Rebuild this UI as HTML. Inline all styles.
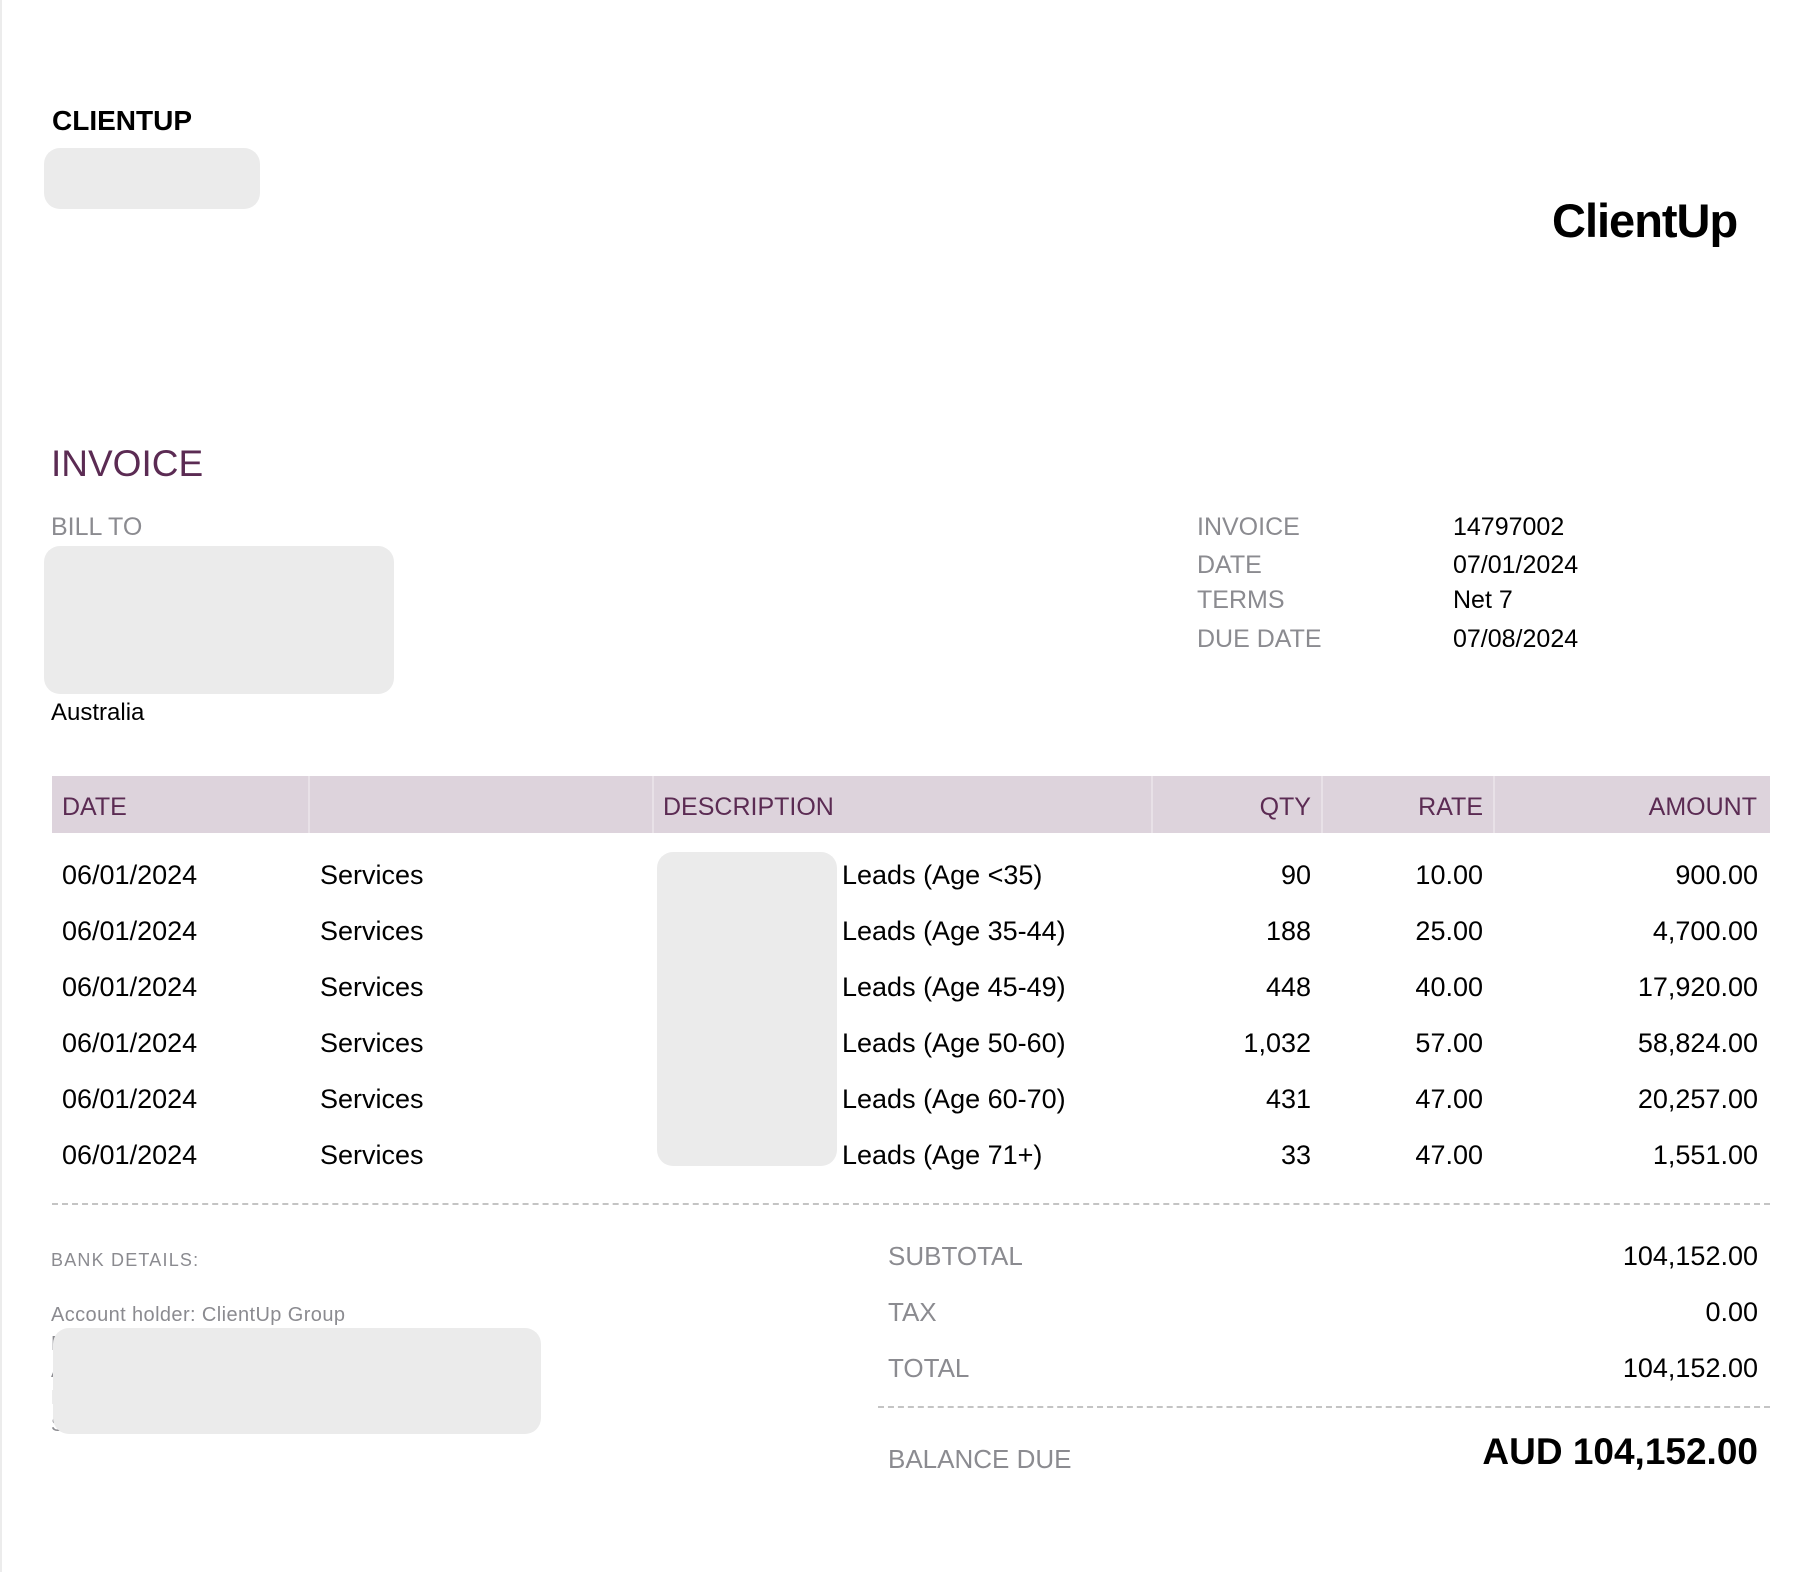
<!DOCTYPE html>
<html><head><meta charset="utf-8"><style>
*{margin:0;padding:0;box-sizing:border-box}
body{width:1818px;height:1572px;background:#fff;position:relative;overflow:hidden;font-family:"Liberation Sans",Arial,sans-serif}
.t{position:absolute;line-height:1;white-space:nowrap}
.r{text-align:right}
.g{color:#8b8b90}
.p{color:#5b2b53}
.box{position:absolute;background:#ebebeb;border-radius:16px}
.hdr{position:absolute;left:52px;top:776px;width:1718px;height:57px;background:#ddd3dc}
.sep{position:absolute;top:776px;width:2px;height:57px;background:#e8e1e7}
.dash{position:absolute;height:0;border-top:2px dashed #c4c4c4}
</style></head><body>
<div style="position:absolute;left:0;top:0;width:2px;height:1572px;background:#ececec"></div>
<div class="t" style="left:52px;top:107px;font-size:28px;font-weight:bold">CLIENTUP</div>
<div class="box" style="left:44px;top:148px;width:216px;height:61px"></div>
<div class="t" style="left:1552px;top:197px;font-size:47px;font-weight:bold;letter-spacing:-1px">ClientUp</div>

<div class="t p" style="left:51px;top:445px;font-size:37px">INVOICE</div>
<div class="t g" style="left:51px;top:515px;font-size:25px">BILL TO</div>
<div class="box" style="left:44px;top:546px;width:350px;height:148px"></div>
<div class="t" style="left:51px;top:701px;font-size:24px">Australia</div>

<div class="t g" style="left:1197px;top:515px;font-size:25px">INVOICE</div>
<div class="t g" style="left:1197px;top:553px;font-size:25px">DATE</div>
<div class="t g" style="left:1197px;top:588px;font-size:25px">TERMS</div>
<div class="t g" style="left:1197px;top:627px;font-size:25px">DUE DATE</div>
<div class="t" style="left:1453px;top:515px;font-size:25px">14797002</div>
<div class="t" style="left:1453px;top:553px;font-size:25px">07/01/2024</div>
<div class="t" style="left:1453px;top:588px;font-size:25px">Net 7</div>
<div class="t" style="left:1453px;top:627px;font-size:25px">07/08/2024</div>

<div class="hdr"></div>
<div class="sep" style="left:308px"></div>
<div class="sep" style="left:652px"></div>
<div class="sep" style="left:1151px"></div>
<div class="sep" style="left:1321px"></div>
<div class="sep" style="left:1493px"></div>
<div class="t p" style="left:62px;top:795px;font-size:25px">DATE</div>
<div class="t p" style="left:663px;top:795px;font-size:25px">DESCRIPTION</div>
<div class="t p r" style="right:507px;top:795px;font-size:25px">QTY</div>
<div class="t p r" style="right:335px;top:795px;font-size:25px">RATE</div>
<div class="t p r" style="right:61px;top:795px;font-size:25px">AMOUNT</div>

<div class="box" style="left:657px;top:852px;width:180px;height:314px"></div>

<div class="t" style="left:62px;top:847px;font-size:27px;line-height:56px">06/01/2024<br>06/01/2024<br>06/01/2024<br>06/01/2024<br>06/01/2024<br>06/01/2024</div>
<div class="t" style="left:320px;top:847px;font-size:27px;line-height:56px">Services<br>Services<br>Services<br>Services<br>Services<br>Services</div>
<div class="t" style="left:842px;top:847px;font-size:27px;line-height:56px">Leads (Age &lt;35)<br>Leads (Age 35-44)<br>Leads (Age 45-49)<br>Leads (Age 50-60)<br>Leads (Age 60-70)<br>Leads (Age 71+)</div>
<div class="t r" style="right:507px;top:847px;font-size:27px;line-height:56px">90<br>188<br>448<br>1,032<br>431<br>33</div>
<div class="t r" style="right:335px;top:847px;font-size:27px;line-height:56px">10.00<br>25.00<br>40.00<br>57.00<br>47.00<br>47.00</div>
<div class="t r" style="right:60px;top:847px;font-size:27px;line-height:56px">900.00<br>4,700.00<br>17,920.00<br>58,824.00<br>20,257.00<br>1,551.00</div>

<div class="dash" style="left:52px;top:1203px;width:1718px"></div>

<div class="t g" style="left:51px;top:1251px;font-size:18px;letter-spacing:1.2px">BANK DETAILS:</div>
<div class="t g" style="left:51px;top:1305px;font-size:20px;letter-spacing:0.4px">Account holder: ClientUp Group</div>
<div class="t g" style="left:51px;top:1331px;font-size:20px;line-height:27px">F<br>A<br>I<br>S</div>
<div class="box" style="left:53px;top:1328px;width:488px;height:106px"></div>

<div class="t g" style="left:888px;top:1243px;font-size:26px">SUBTOTAL</div>
<div class="t g" style="left:888px;top:1299px;font-size:26px">TAX</div>
<div class="t g" style="left:888px;top:1355px;font-size:26px">TOTAL</div>
<div class="t r" style="right:60px;top:1243px;font-size:27px">104,152.00</div>
<div class="t r" style="right:60px;top:1299px;font-size:27px">0.00</div>
<div class="t r" style="right:60px;top:1355px;font-size:27px">104,152.00</div>
<div class="dash" style="left:878px;top:1406px;width:892px"></div>
<div class="t g" style="left:888px;top:1446px;font-size:26px">BALANCE DUE</div>
<div class="t r" style="right:60px;top:1433px;font-size:37px;font-weight:bold">AUD 104,152.00</div>
</body></html>
